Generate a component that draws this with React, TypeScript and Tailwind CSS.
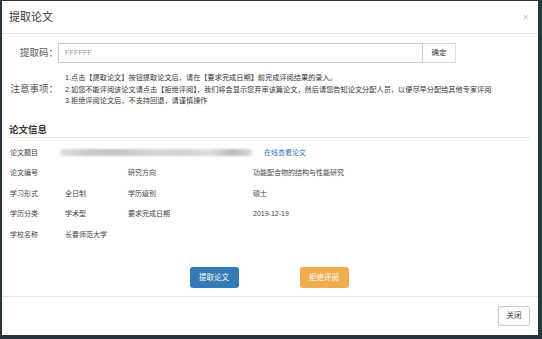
const rows = [
  ['论文编号', '', '研究方向', '功能配合物的结构与性能研究'],
  ['学习形式', '全日制', '学历级别', '硕士'],
  ['学历分类', '学术型', '要求完成日期', '2019-12-19'],
  ['学校名称', '长春师范大学', '', ''],
];

export default function App() {
  return (
    <div className="w-[542px] h-[339px] bg-[#27353d] pt-px pl-[2px] pr-[4px] pb-[4px] font-['Liberation_Sans','Noto_Sans_CJK_SC',sans-serif] text-[#333]">
      <div className="h-full bg-white flex flex-col">
        <div className="h-[33px] shrink-0 border-b border-[#e5e5e5] pl-[7px] pr-[9px] flex items-center justify-between">
          <span className="text-[11px] text-[#333]">提取论文</span>
          <span className="text-[11px] text-[#c4c4c4] leading-none">×</span>
        </div>

        <div className="flex-1 pl-[7px] pr-[8px] pt-[9px]">
          <div className="flex items-center h-[20px]">
            <span className="w-[49px] text-right text-[9.5px] text-[#555]">提取码：</span>
            <div className="w-[365px] h-[20px] border border-[#ccc] flex items-center pl-[6px] text-[7.4px] text-[#999]">
              FFFFFF
            </div>
            <button className="w-[33px] h-[20px] border border-[#ddd] border-l-0 bg-white text-[7.4px] text-[#333]">
              确定
            </button>
          </div>

          <div className="flex items-center mt-[9px]">
            <span className="w-[49px] text-right text-[9.5px] text-[#555] shrink-0">注意事项：</span>
            <div className="pl-[7px] text-[7.2px] leading-[11.5px] text-[#333] whitespace-nowrap">
              <div>1.点击【提取论文】按钮提取论文后，请在【要求完成日期】前完成评阅结果的录入。</div>
              <div>2.如您不能评阅该论文请点击【拒绝评阅】，我们将会显示您弃审该篇论文，然后请您告知论文分配人员，以便尽早分配给其他专家评阅</div>
              <div>3.拒绝评阅论文后，不支持回退，请谨慎操作</div>
            </div>
          </div>

          <div className="mt-[16px] h-[15px] border-b border-[#e5e5e5] text-[9.5px] font-bold leading-[14px] text-[#333]">
            论文信息
          </div>

          <div className="mt-[5px] pl-[1px] text-[7px] text-[#444]">
            <div className="h-[20.5px] flex items-center">
              <span className="w-[50px]">论文题目</span>
              <div className="w-[192px] h-[7px] rounded-sm blur-[1px] bg-[linear-gradient(90deg,#dedede_0%,#cacaca_15%,#c4c4c4_30%,#d6d6d6_50%,#d2d2d2_65%,#dddddd_78%,#bcbcbc_90%,#d8d8d8_100%)]" />
              <a className="ml-[12px] text-[#337ab7]">在线查看论文</a>
            </div>
            {rows.map((r) => (
              <div key={r[0]} className="h-[20.5px] grid grid-cols-[55px_63px_125px_1fr] items-center">
                <span>{r[0]}</span>
                <span>{r[1]}</span>
                <span>{r[2]}</span>
                <span>{r[3]}</span>
              </div>
            ))}
          </div>

          <div className="mt-[22px] flex justify-center gap-[61px] pr-px">
            <button className="w-[49px] h-[21px] rounded-[3px] bg-[#337ab7] text-white text-[7.5px]">提取论文</button>
            <button className="w-[49px] h-[21px] rounded-[3px] bg-[#f0ad4e] text-white text-[7.5px]">拒绝评阅</button>
          </div>
        </div>

        <div className="h-[39px] shrink-0 border-t border-[#e5e5e5] flex items-center justify-end pr-[8px]">
          <button className="w-[32px] h-[20px] border border-[#ccc] rounded-[2px] bg-white text-[7.5px] text-[#333]">关闭</button>
        </div>
      </div>
    </div>
  );
}
